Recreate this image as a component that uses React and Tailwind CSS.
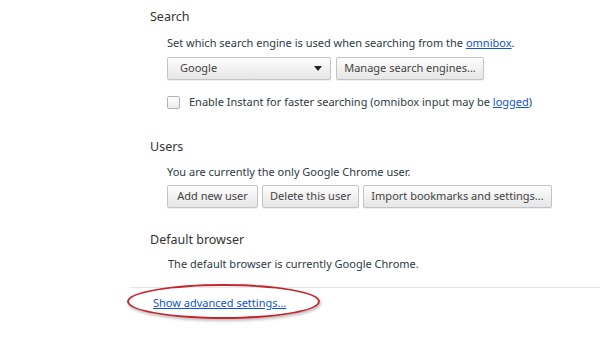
export default function App() {
  const font = { fontFamily: '"Segoe UI", "Noto Sans", "Open Sans", sans-serif' };
  const btn =
    'h-[23px] px-[10px] rounded-[2px] border border-[#c4c4c4] bg-gradient-to-b from-[#fdfdfd] to-[#e6e6e6] text-[11px] text-[#444] whitespace-nowrap shadow-[0_1px_0_rgba(0,0,0,0.06)] flex items-center';

  return (
    <div className="w-[600px] h-[337px] bg-white overflow-hidden text-[#303942]" style={font}>
      <div className="pl-[150px] pt-[7px]">
        {/* Search */}
        <h3 className="text-[12.5px] leading-[20px] text-[#333]">Search</h3>
        <div className="ml-[17px] mt-[8px]">
          <p className="text-[11px] leading-[16px] text-[#303942]">
            Set which search engine is used when searching from the{' '}
            <a className="text-[#1155cc] underline">omnibox</a>.
          </p>
          <div className="mt-[6px] flex gap-[5px]">
            <div className={btn + ' w-[164px] justify-between pl-[12px] pr-[8px]'}>
              <span>Google</span>
              <span className="w-0 h-0 border-l-[4px] border-r-[4px] border-t-[5px] border-l-transparent border-r-transparent border-t-[#222]" />
            </div>
            <div className={btn + ' w-[148px] justify-center'}>Manage search engines...</div>
          </div>
          <label className="mt-[14px] flex items-center gap-[9px] text-[11px] leading-[16px]">
            <span className="w-[13px] h-[13px] rounded-[2px] border border-[#b3b3b3] bg-gradient-to-b from-[#fdfdfd] to-[#ececec]" />
            <span>
              Enable Instant for faster searching (omnibox input may be{' '}
              <a className="text-[#1155cc] underline">logged</a>)
            </span>
          </label>
        </div>

        {/* Users */}
        <h3 className="mt-[27px] text-[12.5px] leading-[20px] text-[#333]">Users</h3>
        <div className="ml-[17px] mt-[7px]">
          <p className="text-[11px] leading-[16px]">You are currently the only Google Chrome user.</p>
          <div className="mt-[5px] flex gap-[4px]">
            <div className={btn + ' w-[91px] justify-center'}>Add new user</div>
            <div className={btn + ' w-[97px] justify-center'}>Delete this user</div>
            <div className={btn + ' w-[189px] justify-center'}>Import bookmarks and settings...</div>
          </div>
        </div>

        {/* Default browser */}
        <h3 className="mt-[22px] text-[12.5px] leading-[20px] text-[#333]">Default browser</h3>
        <div className="ml-[18px] mt-[6px]">
          <p className="text-[11px] leading-[16px]">The default browser is currently Google Chrome.</p>
        </div>
      </div>

      <div className="mt-[15px] ml-[130px] h-px bg-[#e8e8e8]" />

      <div className="relative pl-[153px] pt-[7px]">
        <a className="block w-fit text-[11px] leading-[16px] text-[#1155cc] underline">Show advanced settings...</a>
        {/* red annotation ellipse */}
        <div className="absolute left-[127px] top-[-4px] w-[193px] h-[35px] rounded-[50%] border-2 border-[#c1272d] shadow-[1px_2px_3px_rgba(0,0,0,0.25)]" />
      </div>
    </div>
  );
}
